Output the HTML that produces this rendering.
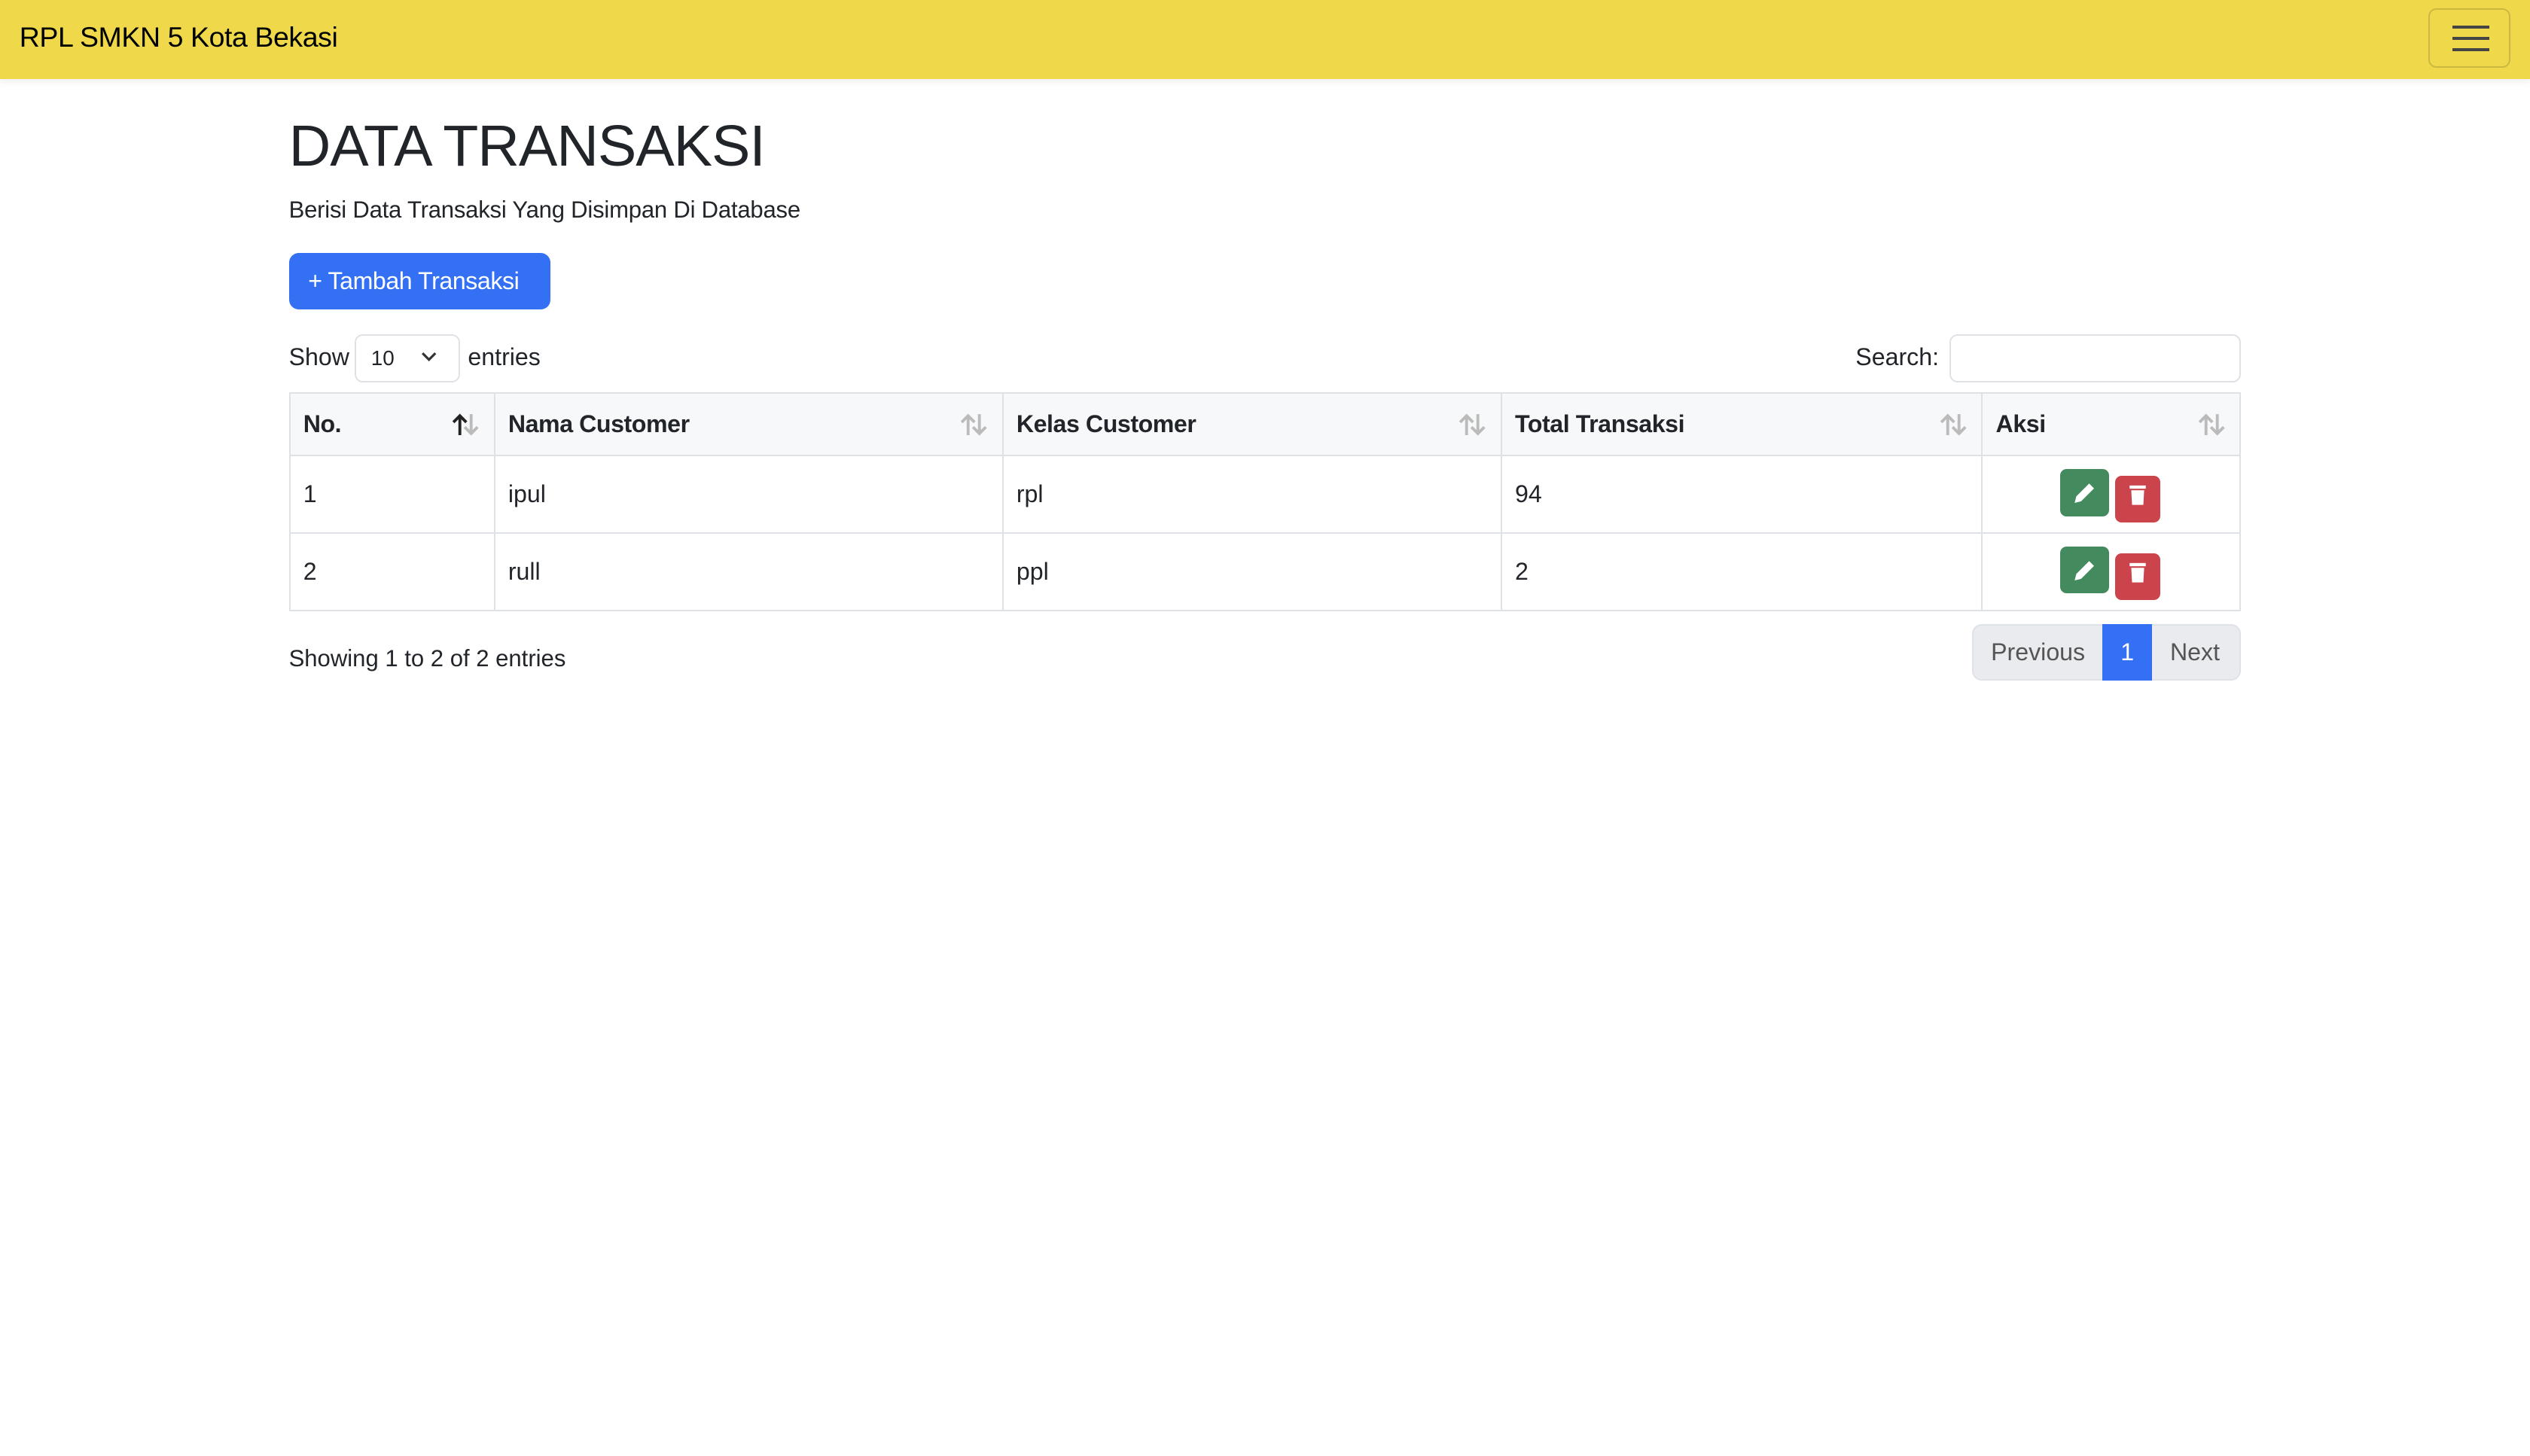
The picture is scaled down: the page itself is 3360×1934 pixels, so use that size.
<!DOCTYPE html>
<html><head><meta charset="utf-8"><style>
html{zoom:2.142857}
*{box-sizing:border-box;margin:0;padding:0}
body{width:1568px;height:902px;background:#fff;font-family:"Liberation Sans",Arial,sans-serif;color:#212529;font-size:15px;position:relative;overflow:hidden}
.nav{position:absolute;left:0;top:0;width:1568px;height:49px;background:#efd94a;box-shadow:0 2px 4px rgba(0,0,0,.06)}
.brand{position:absolute;left:12px;top:13px;font-size:17.5px;color:#000;letter-spacing:-.2px}
.tog{position:absolute;left:1505px;top:5px;width:51px;height:37px;border:1px solid rgba(0,0,0,.15);border-radius:5px}
.tog i{position:absolute;left:14px;width:23px;height:2px;background:#444}
.a{position:absolute}
h1{position:absolute;left:179px;top:70px;font-size:36px;font-weight:500;letter-spacing:-.5px}
.btn{left:179px;top:157px;width:162px;height:35px;background:#3370f4;border-radius:6px;color:#fff;font-size:15px;line-height:35px;padding-left:12px;letter-spacing:-.2px}
.sel{left:220px;top:207px;width:65px;height:30px;border:1px solid #dee2e6;border-radius:5px;font-size:13px;line-height:28px;padding-left:9px}
.search{left:1208px;top:207px;width:181px;height:30px;border:1px solid #dee2e6;border-radius:5px}
table{position:absolute;left:179px;top:243px;width:1210px;border-collapse:collapse;table-layout:fixed}
td,th{border:1px solid #dee2e6;text-align:left;padding:0 8px;position:relative}
th{height:39px;background:#f7f8fa;font-weight:bold;letter-spacing:-.2px}
td{height:48px}
.s{position:absolute;right:8px;top:12px}
.ic{position:absolute;top:8px;width:30px;height:29px;border-radius:4px}
.pg{left:1222px;top:387px;width:167px;height:35px;background:#e9ebef;border:1px solid #dee2e6;border-radius:6px;color:#555;line-height:33px}
</style></head><body>
<div class="nav"><div class="brand">RPL SMKN 5 Kota Bekasi</div><div class="tog"><i style="top:10px"></i><i style="top:17px"></i><i style="top:24px"></i></div></div>
<h1>DATA TRANSAKSI</h1>
<div class="a" style="left:179px;top:122px;font-size:14.5px;letter-spacing:-.1px">Berisi Data Transaksi Yang Disimpan Di Database</div>
<div class="a btn">+ Tambah Transaksi</div>
<div class="a" style="left:179px;top:213px">Show</div>
<div class="a sel">10 <svg style="position:absolute;left:40px;top:10px" width="10" height="7" viewBox="0 0 10 7"><path d="M1 1l4 4 4-4" stroke="#333" stroke-width="1.5" fill="none"/></svg></div>
<div class="a" style="left:290px;top:213px">entries</div>
<div class="a" style="left:1150px;top:213px">Search:</div>
<div class="a search"></div>
<table>
<colgroup><col style="width:127px"><col style="width:315px"><col style="width:309px"><col style="width:298px"><col></colgroup>
<tr><th>No.<svg class="s" width="18" height="15" viewBox="0 0 18 15"><path d="M5 14V2M1 6l4-4 4 4" stroke="#222" stroke-width="1.8" fill="none"/><path d="M12 1v12M8 9l4 4 4-4" stroke="#bbb" stroke-width="1.8" fill="none"/></svg></th><th>Nama Customer<svg class="s" width="18" height="15" viewBox="0 0 18 15"><path d="M5 14V2M1 6l4-4 4 4M12 1v12M8 9l4 4 4-4" stroke="#bbb" stroke-width="1.8" fill="none"/></svg></th><th>Kelas Customer<svg class="s" width="18" height="15" viewBox="0 0 18 15"><path d="M5 14V2M1 6l4-4 4 4M12 1v12M8 9l4 4 4-4" stroke="#bbb" stroke-width="1.8" fill="none"/></svg></th><th>Total Transaksi<svg class="s" width="18" height="15" viewBox="0 0 18 15"><path d="M5 14V2M1 6l4-4 4 4M12 1v12M8 9l4 4 4-4" stroke="#bbb" stroke-width="1.8" fill="none"/></svg></th><th>Aksi<svg class="s" width="18" height="15" viewBox="0 0 18 15"><path d="M5 14V2M1 6l4-4 4 4M12 1v12M8 9l4 4 4-4" stroke="#bbb" stroke-width="1.8" fill="none"/></svg></th></tr>
<tr><td>1</td><td>ipul</td><td>rpl</td><td>94</td><td><div class="ic" style="left:48px;background:#438a5e"><svg width="30" height="29" viewBox="0 0 30 29"><path d="M9 21l1-4 8-8 3 3-8 8z" fill="#fff"/></svg></div><div class="ic" style="left:82px;top:12px;width:28px;background:#cc444b"><svg width="28" height="28" viewBox="0 0 28 28"><path d="M9 6h10v2H9zM10 9h8l-.5 9h-7z" fill="#fff"/></svg></div></td></tr>
<tr><td>2</td><td>rull</td><td>ppl</td><td>2</td><td><div class="ic" style="left:48px;background:#438a5e"><svg width="30" height="29" viewBox="0 0 30 29"><path d="M9 21l1-4 8-8 3 3-8 8z" fill="#fff"/></svg></div><div class="ic" style="left:82px;top:12px;width:28px;background:#cc444b"><svg width="28" height="28" viewBox="0 0 28 28"><path d="M9 6h10v2H9zM10 9h8l-.5 9h-7z" fill="#fff"/></svg></div></td></tr>
</table>
<div class="a" style="left:179px;top:400px;font-size:14.5px">Showing 1 to 2 of 2 entries</div>
<div class="a pg"><span style="position:absolute;left:11px;font-size:15px">Previous</span><span style="position:absolute;left:80px;top:-1px;width:31px;height:35px;background:#3370f4;color:#fff;text-align:center;line-height:35px">1</span><span style="position:absolute;left:122px;font-size:15px">Next</span></div>
</body></html>
